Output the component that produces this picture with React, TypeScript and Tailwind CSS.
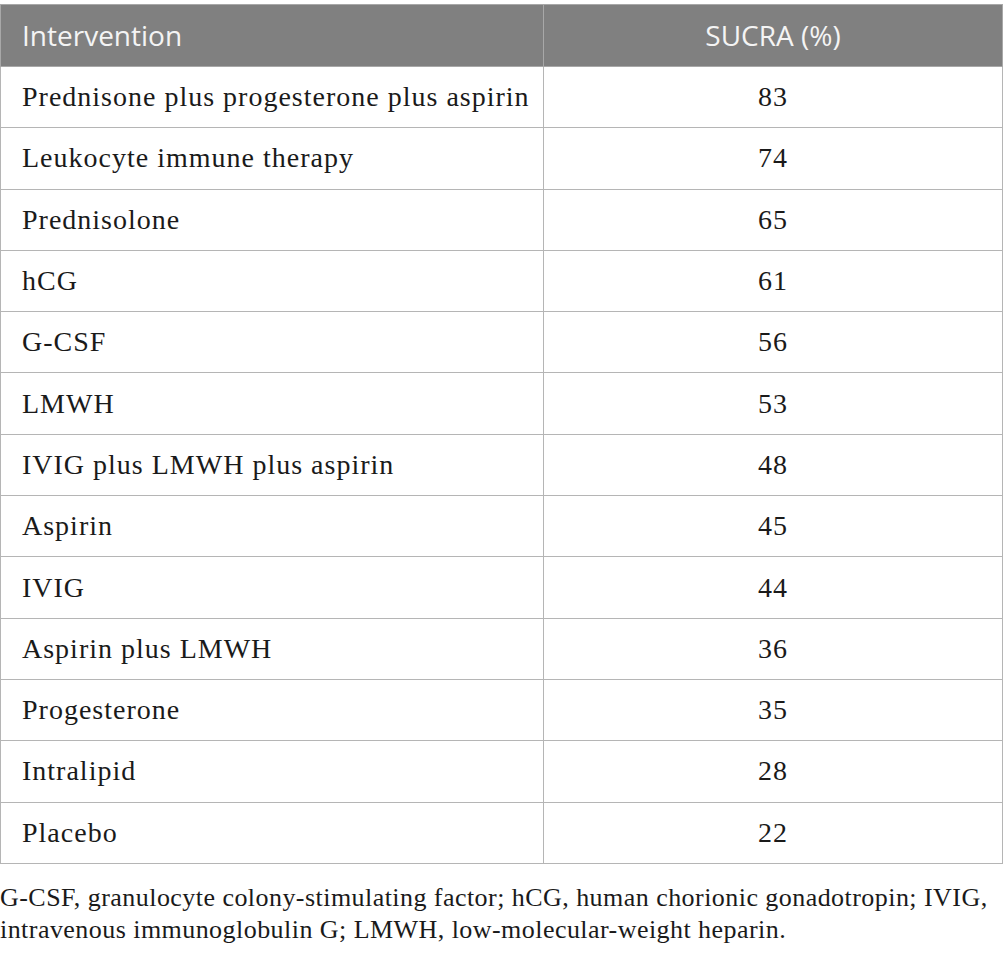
import React from "react";

const rows: [string, string][] = [
  ["Prednisone plus progesterone plus aspirin", "83"],
  ["Leukocyte immune therapy", "74"],
  ["Prednisolone", "65"],
  ["hCG", "61"],
  ["G-CSF", "56"],
  ["LMWH", "53"],
  ["IVIG plus LMWH plus aspirin", "48"],
  ["Aspirin", "45"],
  ["IVIG", "44"],
  ["Aspirin plus LMWH", "36"],
  ["Progesterone", "35"],
  ["Intralipid", "28"],
  ["Placebo", "22"],
];

export default function App() {
  return (
    <div className="w-[1004px] h-[954px] bg-white pt-[4px]">
      <table className="w-[1003px] border-collapse border border-[#b5b5b5] table-fixed">
        <colgroup>
          <col className="w-[543px]" />
          <col />
        </colgroup>
        <thead>
          <tr className="h-[62px] bg-[#808080]">
            <th className="border border-[#a8a8a8] text-left font-normal pl-[21px] pb-[2px] text-[28px] leading-none text-[#f4f4f4] font-['Open_Sans',sans-serif] p-0">
              Intervention
            </th>
            <th className="border border-[#a8a8a8] text-center font-normal pb-[2px] text-[28px] leading-none text-[#f4f4f4] font-['Open_Sans',sans-serif] p-0">
              SUCRA (%)
            </th>
          </tr>
        </thead>
        <tbody>
          {rows.map(([name, v]) => (
            <tr key={name} className="h-[61.3px]">
              <td className="border border-[#b5b5b5] pl-[21px] p-0 text-[28px] tracking-[1px] text-[#1a1a1a] font-['Liberation_Serif',serif]">
                {name}
              </td>
              <td className="border border-[#b5b5b5] text-center p-0 text-[28px] tracking-[1px] text-[#1a1a1a] font-['Liberation_Serif',serif]">
                {v}
              </td>
            </tr>
          ))}
        </tbody>
      </table>
      <p className="mt-[18px] pl-0 text-[26px] tracking-[0.45px] leading-[32px] text-[#1a1a1a] font-['Liberation_Serif',serif]">
        G-CSF, granulocyte colony-stimulating factor; hCG, human chorionic gonadotropin; IVIG, intravenous immunoglobulin G; LMWH, low-molecular-weight heparin.
      </p>
    </div>
  );
}
